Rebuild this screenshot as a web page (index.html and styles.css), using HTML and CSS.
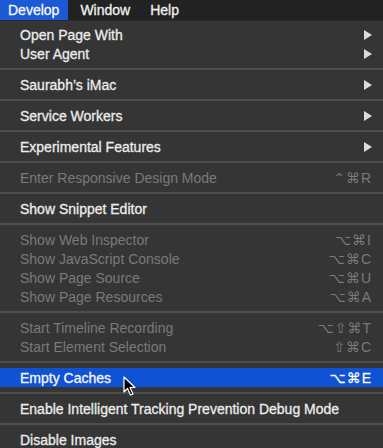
FILE: index.html
```html
<!DOCTYPE html>
<html lang="en">
<head>
    <meta charset="UTF-8">
    <meta name="viewport" content="width=device-width, initial-scale=1.0">
    <title>Develop Menu</title>
    <link rel="stylesheet" href="styles.css">
</head>
<body>
    <header class="menubar">
        <span class="bar-item active">Develop</span>
        <span class="bar-item">Window</span>
        <span class="bar-item">Help</span>
    </header>
    <div class="menu">
        <div class="item"><span>Open Page With</span><span class="arrow"></span></div>
        <div class="item"><span>User Agent</span><span class="arrow"></span></div>
        <div class="sep"></div>
        <div class="item"><span>Saurabh’s iMac</span><span class="arrow"></span></div>
        <div class="sep"></div>
        <div class="item"><span>Service Workers</span><span class="arrow"></span></div>
        <div class="sep"></div>
        <div class="item"><span>Experimental Features</span><span class="arrow"></span></div>
        <div class="sep"></div>
        <div class="item disabled"><span>Enter Responsive Design Mode</span><span class="keys">⌃⌘R</span></div>
        <div class="sep"></div>
        <div class="item"><span>Show Snippet Editor</span></div>
        <div class="sep"></div>
        <div class="item disabled"><span>Show Web Inspector</span><span class="keys">⌥⌘I</span></div>
        <div class="item disabled"><span>Show JavaScript Console</span><span class="keys">⌥⌘C</span></div>
        <div class="item disabled"><span>Show Page Source</span><span class="keys">⌥⌘U</span></div>
        <div class="item disabled"><span>Show Page Resources</span><span class="keys">⌥⌘A</span></div>
        <div class="sep"></div>
        <div class="item disabled"><span>Start Timeline Recording</span><span class="keys">⌥⇧⌘T</span></div>
        <div class="item disabled"><span>Start Element Selection</span><span class="keys">⇧⌘C</span></div>
        <div class="sep"></div>
        <div class="item selected">
            <span>Empty Caches</span><span class="keys">⌥⌘E</span>
            <svg class="cursor" width="14" height="21" viewBox="0 0 14 21">
                <path d="M1 1 L1 16 L4.5 12.5 L7.5 19 L10 18 L7 11.5 L12 11.5 Z" fill="#000" stroke="#fff" stroke-width="1.2" stroke-linejoin="round"/>
            </svg>
        </div>
        <div class="sep"></div>
        <div class="item"><span>Enable Intelligent Tracking Prevention Debug Mode</span></div>
        <div class="sep"></div>
        <div class="item"><span>Disable Images</span></div>
    </div>
</body>
</html>
```

FILE: styles.css
```css
body {
    margin: 0;
    padding: 0;
    font-family: "Liberation Sans", Arial, sans-serif;
    font-size: 14px;
    background-color: #353535;
    color: #ececec;
    overflow: hidden;
}
.menubar {
    display: flex;
    height: 20px;
    background-color: #222;
    border-bottom: 1px solid #2c2c2c;
}
.bar-item {
    padding: 0 8px 0 8px;
    line-height: 20px;
    color: #f0f0f0;
    margin-right: 4px;
    -webkit-text-stroke: 0.3px #f0f0f0;
}
.bar-item.active {
    background-color: #1b5ad6;
    color: #fff;
    padding-right: 9px;
}
.menu {
    padding-top: 4px;
    background-color: #353535;
}
.item {
    position: relative;
    display: flex;
    justify-content: space-between;
    align-items: center;
    height: 19px;
    padding: 0 11px 0 20px;
    white-space: nowrap;
    -webkit-text-stroke: 0.3px #ececec;
}
.item.disabled {
    color: #7a7a7a;
    -webkit-text-stroke: 0;
}
.item.selected {
    background-color: #0f52d4;
    color: #fff;
}
.keys {
    font-family: "Liberation Sans", "DejaVu Sans", sans-serif;
    letter-spacing: 1px;
}
.arrow {
    width: 0;
    height: 0;
    border-top: 5px solid transparent;
    border-bottom: 5px solid transparent;
    border-left: 8px solid #dcdcdc;
}
.sep {
    height: 12px;
    display: flex;
    align-items: center;
}
.sep::before {
    content: "";
    display: block;
    width: 100%;
    height: 2px;
    background-color: #4e4e4e;
}
.cursor {
    position: absolute;
    left: 123px;
    top: 8px;
}
```
